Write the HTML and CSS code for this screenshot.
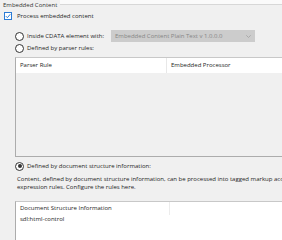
FILE: index.html
```html
<!DOCTYPE html>
<html lang="en">
<head>
    <meta charset="UTF-8">
    <title>Embedded Content</title>
    <link rel="stylesheet" href="styles.css">
</head>
<body>

<div class="panel">
    <div class="title-row">
        <span class="title">Embedded Content</span>
        <div class="title-rule"></div>
    </div>

    <div class="check-row">
        <span class="checkbox checked">
            <svg width="6" height="6" viewBox="0 0 6 6"><path d="M0.8 3.1 L2.4 4.7 L5.3 1.2" fill="none" stroke="#2a7bd6" stroke-width="1"/></svg>
        </span>
        <span class="label">Process embedded content</span>
    </div>

    <div class="option-row cdata-row">
        <span class="radio"></span>
        <span class="label cdata-label">Inside CDATA element with:</span>
        <div class="dropdown">
            <span>Embedded Content Plain Text v 1.0.0.0</span>
            <svg class="chevron" width="5" height="3" viewBox="0 0 5 3"><path d="M0.3 0.3 L2.5 2.5 L4.7 0.3" fill="none" stroke="#a6a6a6" stroke-width="0.9"/></svg>
        </div>
    </div>

    <div class="option-row parser-row">
        <span class="radio"></span>
        <span class="label">Defined by parser rules:</span>
    </div>

    <!-- parser rules grid -->
    <div class="grid rules-grid">
        <div class="grid-head">
            <div class="col-first">Parser Rule</div>
            <div class="col-second">Embedded Processor</div>
        </div>
        <div class="grid-body"></div>
    </div>

    <div class="option-row doc-row">
        <span class="radio selected"></span>
        <span class="label">Defined by document structure information:</span>
    </div>

    <p class="note">Content, defined by document structure information, can be processed into tagged markup according to regular<br>expression rules. Configure the rules here.</p>

    <!-- document structure grid -->
    <div class="grid doc-grid">
        <div class="grid-head">
            <div class="col-first">Document Structure Information</div>
            <div class="col-second"></div>
        </div>
        <div class="grid-row">sdl:html-control</div>
    </div>
</div>

</body>
</html>
```

FILE: styles.css
```css
body {
    margin: 0;
    padding: 0;
    background-color: #f0f0f0;
    font-family: "Open Sans", "Noto Sans", sans-serif;
    font-size: 6px;
    color: #1e1e1e;
    overflow: hidden;
}

.panel {
    width: 282px;
    height: 240px;
    display: flex;
    flex-direction: column;
    overflow: hidden;
}

.title-row {
    display: flex;
    height: 10px;
    padding-left: 3px;
}

.title {
    line-height: 10px;
    white-space: nowrap;
    color: #333;
}

.title-rule {
    flex: 1;
    height: 4px;
    margin-left: 3px;
    background-color: #fafafa;
    border-bottom: 1px solid #d7d7d7;
}

.check-row {
    display: flex;
    align-items: center;
    height: 8px;
    margin-top: 2px;
    padding-left: 4px;
}

.checkbox {
    width: 6px;
    height: 6px;
    border: 1px solid #2a7bd6;
    background-color: #fff;
    display: flex;
    align-items: center;
    justify-content: center;
    margin-right: 5px;
}

.label {
    white-space: nowrap;
}

.option-row {
    display: flex;
    align-items: center;
    padding-left: 15px;
    height: 8px;
}

.cdata-row {
    height: 12px;
    margin-top: 10px;
}

.parser-row {
    margin-top: 2px;
}

.radio {
    width: 7px;
    height: 7px;
    border: 1px solid #333;
    border-radius: 50%;
    background-color: #fff;
    box-sizing: content-box;
    margin-right: 3px;
    display: flex;
    align-items: center;
    justify-content: center;
}

.radio.selected::after {
    content: "";
    width: 4px;
    height: 4px;
    border-radius: 50%;
    background-color: #333;
}

.cdata-label {
    width: 84px;
}

.dropdown {
    width: 144px;
    height: 12px;
    background-color: #cccccc;
    color: #868686;
    display: flex;
    align-items: center;
    justify-content: space-between;
    padding: 0 4px;
    box-sizing: border-box;
}

.grid {
    margin-left: 15px;
    border-left: 1px solid #acacac;
    border-top: 1px solid #c8c8c8;
}

.grid-head {
    display: flex;
    height: 15px;
    background-color: #fff;
}

.grid-head div {
    line-height: 15px;
    padding-left: 4px;
    white-space: nowrap;
}

.rules-grid {
    margin-top: 5px;
    border-bottom: 1px solid #acacac;
}

.rules-grid .col-first {
    width: 146px;
    border-right: 1px solid #e8e8e8;
}

.grid-body {
    height: 83px;
}

.doc-row {
    margin-top: 5px;
}

.note {
    margin: 5px 0 0;
    padding-left: 17px;
    line-height: 8px;
    white-space: nowrap;
}

.doc-grid {
    margin-top: 10px;
    flex: 1;
    background-color: #fff;
}

.doc-grid .grid-head {
    height: 13px;
}

.doc-grid .grid-head div {
    line-height: 13px;
}

.doc-grid .col-first {
    width: 149px;
    border-right: 1px solid #ececec;
}

.grid-row {
    line-height: 8px;
    padding-left: 4px;
}
```
